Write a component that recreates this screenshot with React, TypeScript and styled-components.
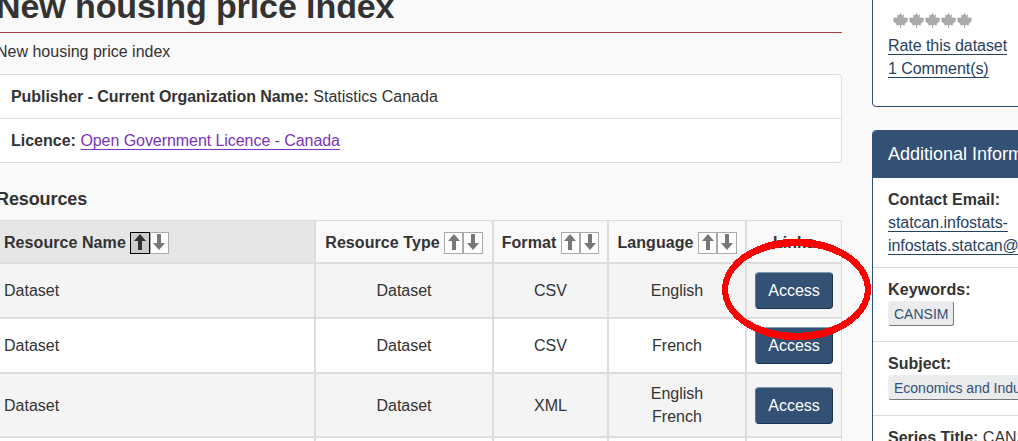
import React from "react";
import styled, { createGlobalStyle } from "styled-components";

const GlobalStyle = createGlobalStyle`
  * { box-sizing: border-box; }
  body {
    margin: 0;
    overflow: hidden;
    background: #f9f9f9;
    color: #333;
    font: 16px/23px "Liberation Sans", Arial, sans-serif;
  }
`;

const Page = styled.div`
  display: flex;
  align-items: flex-start;
  gap: 30px;
  width: 1022px;
  height: 441px;
  margin-left: -4px;
  overflow: hidden;
`;

const Main = styled.main`
  position: relative;
  width: 846px;
  flex: none;
`;

const Title = styled.h1`
  margin: -14px 0 7px;
  height: 47px;
  border-bottom: 1px solid #af3c43;
  font-size: 34px;
  line-height: 40px;
  letter-spacing: -0.09px;
`;

const Description = styled.p`
  margin: 0 0 11px;
`;

const InfoList = styled.ul`
  margin: 0;
  padding: 0;
  list-style: none;
  background: #fff;
  border: 1px solid #ddd;
  border-radius: 4px;
`;

const InfoItem = styled.li`
  height: 43px;
  padding: 10px 14px;
  & + & {
    border-top: 1px solid #ddd;
    height: 44px;
  }
`;

const Label = styled.b<{ $tracking?: number }>`
  letter-spacing: ${(p) => p.$tracking ?? 0}px;
`;

const Link = styled.a<{ $visited?: boolean }>`
  color: ${(p) => (p.$visited ? "#7834bc" : "#284162")};
  text-decoration: underline;
  text-decoration-thickness: 1px;
  text-decoration-skip-ink: none;
  text-underline-offset: 3px;
  letter-spacing: -0.06px;
`;

const SectionTitle = styled.h2`
  margin: 24px 0 9px;
  font-size: 18px;
  line-height: 24px;
  letter-spacing: -0.1px;
`;

const Table = styled.div`
  border: 1px solid #ddd;
  border-left: 0;
`;

const Row = styled.div<{ $height: number; $bg: string }>`
  display: grid;
  grid-template-columns: 320px 178px 115px 138px 94px;
  height: ${(p) => p.$height}px;
  background: ${(p) => p.$bg};
`;

const Cell = styled.div<{ $first?: boolean; $sorted?: boolean; $head?: boolean }>`
  display: flex;
  align-items: center;
  justify-content: ${(p) => (p.$first ? "flex-start" : "center")};
  padding: ${(p) => (p.$head ? "2px 8px 0" : "0 8px")};
  border-right: 2px solid #ddd;
  border-bottom: 2px solid #ddd;
  text-align: center;
  white-space: pre-line;
  font-weight: ${(p) => (p.$head ? 700 : 400)};
  letter-spacing: ${(p) => (p.$head ? 0.07 : 0)}px;
  background: ${(p) => (p.$sorted ? "#e6e6e6" : "transparent")};
  &:last-child { border-right: 0; }
`;

const SortGroup = styled.span`
  display: flex;
  margin-left: 4.4px;
`;

const SortButton = styled.button<{ $active?: boolean }>`
  display: flex;
  align-items: center;
  justify-content: center;
  width: 19.3px;
  height: 22px;
  padding: 0 0 2px;
  border: 1px solid ${(p) => (p.$active ? "#000" : "#aaa")};
  background: ${(p) => (p.$active ? "#ccc" : "#fff")};
  color: ${(p) => (p.$active ? "#333" : "#777")};
`;

const AccessButton = styled.button`
  width: 78px;
  height: 37px;
  padding: 0;
  border: 1px solid;
  border-color: #8399af #1e3350 #1e3350 #5f7895;
  border-radius: 4px;
  background: #335075;
  color: #fff;
  font: inherit;
`;

const Highlight = styled.svg`
  position: absolute;
  left: 724px;
  top: 237px;
  pointer-events: none;
`;

const Aside = styled.aside`
  display: flex;
  flex-direction: column;
  gap: 23px;
  width: 300px;
  flex: none;
`;

const Panel = styled.section<{ $rating?: boolean }>`
  border: 1px solid #335075;
  border-radius: 4px;
  background: #fff;
  overflow: hidden;
  ${(p) => p.$rating && "height: 111px; margin-top: -4px; padding: 15px;"}
`;

const Leaves = styled.div`
  display: flex;
  gap: 1px;
  height: 22px;
  padding: 1px 0 0 4.5px;
  color: #aaa;
`;

const PanelHeader = styled.h3`
  margin: 0;
  height: 47px;
  padding: 11px 15px;
  background: #335075;
  color: #fff;
  font-size: 18px;
  font-weight: 400;
  line-height: 24px;
`;

const PanelItem = styled.div<{ $height: number }>`
  height: ${(p) => p.$height}px;
  padding: 10px 15px;
  border-bottom: 1px solid #ddd;
  white-space: nowrap;
`;

const Tag = styled.a`
  display: block;
  width: max-content;
  height: 25px;
  padding: 0 5px;
  border: 1px solid;
  border-color: #eceef0 #777 #777 #eceef0;
  border-radius: 3px;
  background: #eaebed;
  color: #335075;
  font-size: 14px;
  line-height: 24px;
`;

const Arrow = ({ down }: { down?: boolean }) => (
  <svg width="12" height="16" viewBox="0 0 12 16">
    <path
      fill="currentColor"
      d={down ? "M4 0H8V9H12L6 16L0 9H4Z" : "M6 0L12 7H8V16H4V7H0Z"}
    />
  </svg>
);

const Leaf = () => (
  <svg width="15" height="15" viewBox="0 0 15 15">
    <path
      fill="currentColor"
      d="M7.5 0L9.3 2.4L11 1.6L10.6 5.2L12.2 3.9L12.9 5L15 4.8L14.4 7.3L15 8L11.7 11L11.9 12.4L8.1 12V15H6.9V12L3.1 12.4L3.3 11L0 8L.6 7.3L0 4.8L2.1 5L2.8 3.9L4.4 5.2L4 1.6L5.7 2.4Z"
    />
  </svg>
);

const Sorter = ({ active }: { active?: boolean }) => (
  <SortGroup>
    <SortButton $active={active}><Arrow /></SortButton>
    <SortButton><Arrow down /></SortButton>
  </SortGroup>
);

const columns = ["Resource Name", "Resource Type", "Format", "Language", "Links"];
const rows = [
  { format: "CSV", language: "English", height: 55, bg: "#f4f4f4" },
  { format: "CSV", language: "French", height: 55, bg: "#fff" },
  { format: "XML", language: "English\nFrench", height: 64, bg: "#f4f4f4" },
  { format: "XML", language: "French", height: 55, bg: "#fff" },
];

export default function App() {
  return (
    <>
      <GlobalStyle />
      <Page>
        <Main>
          <Title>New housing price index</Title>
          <Description>New housing price index</Description>
          <InfoList>
            <InfoItem>
              <Label $tracking={-0.07}>Publisher - Current Organization Name:</Label> Statistics Canada
            </InfoItem>
            <InfoItem>
              <Label>Licence:</Label> <Link $visited>Open Government Licence - Canada</Link>
            </InfoItem>
          </InfoList>
          <SectionTitle>Resources</SectionTitle>
          <Table>
            <Row $height={43} $bg="#f9f9f9">
              {columns.map((name, i) => (
                <Cell key={name} $head $first={i === 0} $sorted={i === 0}>
                  {name}
                  {i < 4 && <Sorter active={i === 0} />}
                </Cell>
              ))}
            </Row>
            {rows.map((row, i) => (
              <Row key={i} $height={row.height} $bg={row.bg}>
                <Cell $first>Dataset</Cell>
                <Cell>Dataset</Cell>
                <Cell>{row.format}</Cell>
                <Cell>{row.language}</Cell>
                <Cell><AccessButton>Access</AccessButton></Cell>
              </Row>
            ))}
          </Table>
          <Highlight width="153" height="105" shapeRendering="crispEdges">
            <path
              fill="#f00"
              fillRule="evenodd"
              d="M2 52.5A74.5 50.8 0 0 1 151 52.5A74.5 50.8 0 0 1 2 52.5ZM8.2 52.5A68.3 43.3 0 0 0 144.8 52.5A68.3 43.3 0 0 0 8.2 52.5Z"
            />
          </Highlight>
        </Main>
        <Aside>
          <Panel $rating>
            <Leaves>
              {[0, 1, 2, 3, 4].map((n) => <Leaf key={n} />)}
            </Leaves>
            <div><Link>Rate this dataset</Link></div>
            <div><Link>1 Comment(s)</Link></div>
          </Panel>
          <Panel>
            <PanelHeader>Additional Information</PanelHeader>
            <PanelItem $height={90}>
              <Label>Contact Email:</Label><br />
              <Link>statcan.infostats-<br />infostats.statcan@canada.ca</Link>
            </PanelItem>
            <PanelItem $height={74}>
              <Label $tracking={0.1}>Keywords:</Label>
              <Tag>CANSIM</Tag>
            </PanelItem>
            <PanelItem $height={74}>
              <Label>Subject:</Label>
              <Tag>Economics and Industry</Tag>
            </PanelItem>
            <PanelItem $height={44}>
              <Label>Series Title:</Label> CANSIM
            </PanelItem>
          </Panel>
        </Aside>
      </Page>
    </>
  );
}
